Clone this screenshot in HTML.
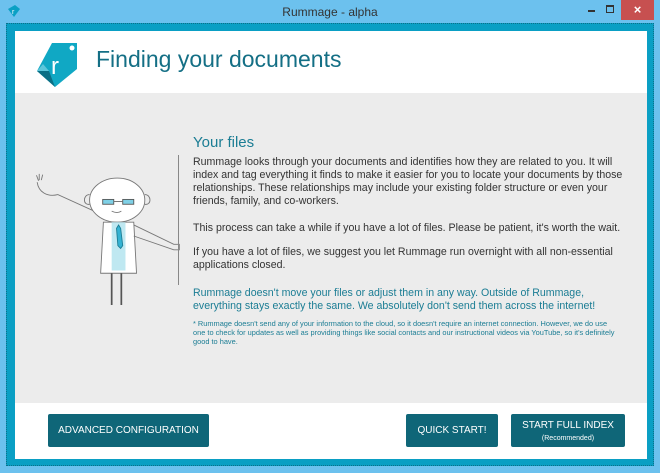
<!DOCTYPE html>
<html><head><meta charset="utf-8"><style>
*{margin:0;padding:0;box-sizing:border-box}
body{width:660px;height:473px;background:#6cc1ee;font-family:"Liberation Sans",sans-serif;position:relative;overflow:hidden}
.tb{position:absolute;top:0;left:0;width:660px;height:22px}
.title{position:absolute;top:5px;left:0;width:660px;text-align:center;font-size:12px;color:#333}
.close{position:absolute;left:621px;top:0;width:33px;height:20px;background:#c75050;color:#fff;text-align:center;font-size:13px;line-height:19px;font-weight:bold}
.frame{position:absolute;left:6px;top:23px;width:648px;height:443px;background:#0a9fc4;border:1px dotted #0b6f8a}
.panel{position:absolute;left:15px;top:31px;width:632px;height:428px;background:#fff}
.gray{position:absolute;left:0;top:62px;width:632px;height:310px;background:#ececec}
h1{position:absolute;left:81px;top:15px;font-weight:normal;font-size:23px;color:#146f85}
h2{position:absolute;left:178px;top:103px;font-weight:normal;font-size:15px;color:#1b7d94}
.txt{position:absolute;left:178px;white-space:nowrap;font-size:10.6px;line-height:13px;color:#333}
.blue{color:#1b7d94}
.small{font-size:7.4px;line-height:9px;color:#1b7d94}
.vl{position:absolute;left:163px;top:62px;width:1px;height:130px;background:#888}
.btn{position:absolute;top:383px;height:33px;background:#0f6678;color:#fff;font-size:10px;text-align:center;border-radius:2px;line-height:33px}
</style></head><body>
<div class="tb">
<svg style="position:absolute;left:7px;top:4px" width="14" height="14"><path d="M1 5 L8 1 L13 5 L7 13 Z" fill="#0aa0c4"/><text x="5" y="10" font-size="7" fill="#fff" font-family="Liberation Sans">r</text></svg>
<div class="title">Rummage - alpha</div>
<div style="position:absolute;left:588px;top:10px;width:7px;height:2px;background:#333"></div>
<div style="position:absolute;left:606px;top:5px;width:8px;height:8px;border:1px solid #333;border-top-width:2px"></div>
<div class="close">×</div>
</div>
<div class="frame"></div>
<div class="panel">
<svg style="position:absolute;left:20px;top:10px" width="45" height="48"><path d="M17 2 L42 2 L42 28 L20 46 L2 30 Z" fill="#10a8c4"/><path d="M2 30 L20 46 L14 30 Z" fill="#0b6f85"/><path d="M2 30 L8 23 L14 30Z" fill="#5cc6da"/><circle cx="37" cy="7" r="2.5" fill="#fff"/><text x="16" y="33" font-size="24" fill="#fff" font-family="Liberation Sans">r</text></svg>
<h1>Finding your documents</h1>
<div class="gray">
<svg style="position:absolute;left:0;top:60px" width="180" height="170" fill="none" stroke="#777" stroke-width="1.3">
<g transform="translate(47,14) scale(0.69)">
<path d="M-34 20 l-3 -8 m4 7 l0 -9 m3 9 l2 -8 M-36 22 c2 14 14 22 30 18 L60 70"/>
<ellipse cx="80" cy="48" rx="40" ry="32" fill="#fff"/>
<path d="M40 40 c-10 0 -10 16 0 14 M120 40 c10 0 10 16 0 14"/>
<rect x="59" y="47" width="16" height="7" fill="#7fd0e6" stroke="#555"/><rect x="88" y="47" width="16" height="7" fill="#7fd0e6" stroke="#555"/>
<path d="M75 50 h13 M72 64 q8 4 14 0"/>
<path d="M60 80 L56 154 L108 154 L104 80 Z" fill="#fff"/>
<path d="M72 80 L72 150 L92 150 L92 80 Z" fill="#bfe8f1" stroke="none"/>
<path d="M82 84 l-3 5 l2 25 l4 4 l3 -4 l-3 -25 Z" fill="#35b3d3" stroke="#1b7d94"/>
<path d="M104 84 L162 112 l8 0 l0 8 l-8 0 L104 100"/>
<path d="M72 154 L72 200 M86 154 L86 200" stroke="#555" stroke-width="2.5"/>
</g>
</svg>
<div class="vl"></div>
</div>
<h2>Your files</h2>
<div class="txt" style="top:125px">Rummage looks through your documents and identifies how they are related to you. It will<br>index and tag everything it finds to make it easier for you to locate your documents by those<br>relationships. These relationships may include your existing folder structure or even your<br>friends, family, and co-workers.</div>
<div class="txt" style="top:191px">This process can take a while if you have a lot of files. Please be patient, it's worth the wait.</div>
<div class="txt" style="top:215px">If you have a lot of files, we suggest you let Rummage run overnight with all non-essential<br>applications closed.</div>
<div class="txt blue" style="top:256px">Rummage doesn't move your files or adjust them in any way. Outside of Rummage,<br>everything stays exactly the same. We absolutely don't send them across the internet!</div>
<div class="txt small" style="top:288px">* Rummage doesn't send any of your information to the cloud, so it doesn't require an internet connection. However, we do use<br>one to check for updates as well as providing things like social contacts and our instructional videos via YouTube, so it's definitely<br>good to have.</div>
<div class="btn" style="left:33px;width:161px">ADVANCED CONFIGURATION</div>
<div class="btn" style="left:391px;width:92px">QUICK START!</div>
<div class="btn" style="left:496px;width:114px;line-height:12px;padding-top:6px">START FULL INDEX<br><span style="font-size:7px">(Recommended)</span></div>
</div>
</body></html>
